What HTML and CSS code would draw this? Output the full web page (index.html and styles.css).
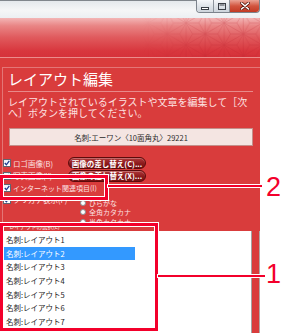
FILE: index.html
```html
<!DOCTYPE html>
<html lang="ja">
<head>
<meta charset="utf-8">
<link rel="stylesheet" href="styles.css">
</head>
<body>
<div class="window">
  <div class="titlebar">
    <div class="caption">
      <span class="cb cb-min"><svg width="8" height="3" viewBox="0 0 8 3"><rect x="0.5" y="0.5" width="7" height="2" fill="#fff" stroke="#3a3f46" stroke-width="1"/></svg></span>
      <span class="cb cb-max"><svg width="8" height="7" viewBox="0 0 8 7"><rect x="0.5" y="0.5" width="7" height="6" fill="none" stroke="#3a3f46" stroke-width="1"/><rect x="1.5" y="1.5" width="5" height="1" fill="#3a3f46"/></svg></span>
      <span class="cb cb-close"><svg width="10" height="8" viewBox="0 0 10 8"><path d="M1.5 1 L8.5 7 M8.5 1 L1.5 7" stroke="#5a1a10" stroke-width="3" stroke-linecap="round"/><path d="M1.5 1 L8.5 7 M8.5 1 L1.5 7" stroke="#fff" stroke-width="1.6" stroke-linecap="round"/></svg></span>
    </div>
  </div>
  <div class="header">
    <svg class="pattern" width="120" height="39" viewBox="0 0 120 39">
      <defs>
        <pattern id="asa" width="22" height="38.1" patternUnits="userSpaceOnUse" patternTransform="rotate(90) translate(-6 -8)">
          <g stroke="#b8202c" stroke-width="0.6" fill="none">
            <path d="M0 0 H22 M0 19.05 H22 M0 38.1 H22"/>
            <path d="M0 19.05 L11 0 L22 19.05 M0 19.05 L11 38.1 L22 19.05"/>
            <path d="M0 19.05 L11 12.7 L22 19.05 M11 0 L11 12.7"/>
            <path d="M11 0 L22 6.35 L33 0 M22 19.05 L22 6.35 M-11 0 L0 6.35 L11 0 M0 19.05 L0 6.35"/>
            <path d="M0 19.05 L11 25.4 L22 19.05 M11 38.1 L11 25.4"/>
            <path d="M11 38.1 L22 31.75 L33 38.1 M22 19.05 L22 31.75 M-11 38.1 L0 31.75 L11 38.1 M0 19.05 L0 31.75"/>
          </g>
        </pattern>
      </defs>
      <rect width="120" height="39" fill="url(#asa)"/>
    </svg>
  </div>
  <div class="panel">
    <div class="panel-inner">
      <h1 class="title">レイアウト編集</h1>
      <div class="rule"></div>
      <p class="desc"><span class="desc-line">レイアウトされているイラストや文章を編集して［次</span><span class="desc-line">へ］ボタンを押してください。</span></p>
      <div class="namefield">名刺:エーワン〈10面角丸〉29221</div>
      <div class="row row-1">
        <span class="chk"><span class="box"><svg width="6" height="6" viewBox="0 0 6 6"><path d="M0.8 3 L2.4 4.8 L5.3 0.9" fill="none" stroke="#1d3c8f" stroke-width="1.3"/></svg></span>ロゴ画像(B)</span>
        <span class="btn">画像の差し替え(C)...</span>
      </div>
      <div class="row row-2">
        <span class="chk"><span class="box"><svg width="6" height="6" viewBox="0 0 6 6"><path d="M0.8 3 L2.4 4.8 L5.3 0.9" fill="none" stroke="#1d3c8f" stroke-width="1.3"/></svg></span>写真画像(X)</span>
        <span class="btn">画像の差し替え(X)...</span>
      </div>
      <div class="row row-3">
        <span class="chk"><span class="box"><svg width="6" height="6" viewBox="0 0 6 6"><path d="M0.8 3 L2.4 4.8 L5.3 0.9" fill="none" stroke="#1d3c8f" stroke-width="1.3"/></svg></span>インターネット関連項目(I)</span>
      </div>
      <div class="row row-4">
        <span class="chk chk-wide"><span class="box"><svg width="6" height="6" viewBox="0 0 6 6"><path d="M0.8 3 L2.4 4.8 L5.3 0.9" fill="none" stroke="#1d3c8f" stroke-width="1.3"/></svg></span>フリガナ表示(F)</span>
        <div class="radios">
          <span class="radio"><span class="dot"></span>ひらがな</span>
          <span class="radio"><span class="dot"></span>全角カタカナ</span>
          <span class="radio"><span class="dot"></span>半角カタカナ</span>
        </div>
      </div>
      <div class="listlabel">レイアウトの選択(L)</div>
    </div>
  </div>
  <div class="lower">
    <ul class="list">
      <li class="item">名刺:レイアウト1</li>
      <li class="item selected">名刺:レイアウト2</li>
      <li class="item">名刺:レイアウト3</li>
      <li class="item">名刺:レイアウト4</li>
      <li class="item">名刺:レイアウト5</li>
      <li class="item">名刺:レイアウト6</li>
      <li class="item">名刺:レイアウト7</li>
    </ul>
  </div>
</div>

<div class="callout callout-2"></div>
<div class="leader leader-2"></div>
<div class="num num-2">2</div>

<div class="callout callout-1"></div>
<div class="leader leader-1"></div>
<div class="num num-1">1</div>
</body>
</html>
```

FILE: styles.css
```css
* { box-sizing: border-box; margin: 0; padding: 0; }
html, body { width: 290px; height: 333px; overflow: hidden; }
body {
  background: #fff;
  position: relative;
  font-family: "Noto Sans CJK JP", "Noto Sans", sans-serif;
}

.window {
  width: 260px;
  height: 333px;
  display: flex;
  flex-direction: column;
}

/* title bar */
.titlebar {
  height: 18px;
  flex: none;
  background: linear-gradient(#e4e8ec, #f5f6f7 55%, #eceff2);
  border-top: 1px solid #80868c;
  display: flex;
  justify-content: flex-end;
  align-items: flex-start;
}
.caption {
  display: flex;
  height: 13px;
  margin-top: -1px;
  border: 1px solid #7c838c;
  border-top: none;
  border-radius: 0 0 4px 4px;
  overflow: hidden;
}
.cb {
  display: flex;
  align-items: center;
  justify-content: center;
  height: 100%;
}
.cb-min { width: 17px; background: linear-gradient(#f6f8fa, #dfe4e9 50%, #cdd4db); border-right: 1px solid #8d949c; padding-top: 4px; }
.cb-max { width: 16px; background: linear-gradient(#f6f8fa, #dfe4e9 50%, #cdd4db); border-right: 1px solid #8d949c; }
.cb-close { width: 29px; background: linear-gradient(#eba496, #d2553f 50%, #c23a24); }

/* red header band */
.header {
  height: 40px;
  flex: none;
  background: linear-gradient(#f3b6b6 0%, #e98585 20%, #e05a5d 50%, #d8363d 85%, #d5323a 100%);
  border-bottom: 1px solid #ec8c8c;
  display: flex;
  justify-content: flex-end;
}
.pattern {
  display: block;
  opacity: 0.32;
  -webkit-mask-image: linear-gradient(to right, transparent, #000 55%);
  mask-image: linear-gradient(to right, transparent, #000 55%);
}

/* red content panel */
.panel {
  height: 173px;
  flex: none;
  background: #d93c3c;
  padding: 9px 0 0 2px;
  overflow: hidden;
}
.panel-inner {
  height: 100%;
  border-top: 1px solid rgba(255, 255, 255, 0.3);
  border-left: 1px solid rgba(255, 255, 255, 0.3);
  display: flex;
  flex-direction: column;
}
.title {
  margin: 1px 0 0 5px;
  font-size: 15px;
  line-height: 19px;
  font-weight: 400;
  color: #fff;
}
.rule {
  margin: 3px 0 0 5px;
  width: 245px;
  height: 1px;
  flex: none;
  background: rgba(255, 255, 255, 0.4);
}
.desc {
  margin: 4px 0 0 5px;
  font-size: 10px;
  color: #fde2e2;
  white-space: nowrap;
  display: flex;
  flex-direction: column;
}
.desc-line {
  display: block;
  height: 11px;
  line-height: 11px;
}
.namefield {
  margin: 10px 0 0 6px;
  width: 244px;
  height: 18px;
  flex: none;
  border: 1px solid #c48f8a;
  background: #f4e5e2;
  color: #2a2a2a;
  font-size: 7.5px;
  display: flex;
  align-items: center;
  justify-content: center;
}

.row {
  display: flex;
  align-items: center;
  flex: none;
  color: #fbe0e0;
  font-size: 7.5px;
}
.row-1 { margin-top: 11px; height: 12px; }
.row-2 { height: 13px; }
.row-3 { height: 11px; font-size: 7px; }
.row-4 { align-items: flex-start; height: 32px; }

.chk {
  display: flex;
  align-items: center;
  width: 65px;
  white-space: nowrap;
}
.chk-wide { width: 77px; margin-top: 1px; }
.box {
  width: 8px;
  height: 8px;
  margin-right: 2px;
  border: 1px solid #5f6670;
  background: linear-gradient(#eef3f8, #ffffff);
  display: flex;
  align-items: center;
  justify-content: center;
  flex: none;
}
.btn {
  width: 78px;
  height: 12px;
  border: 1px solid #5c0b0b;
  border-radius: 6px;
  background: linear-gradient(#b0393a, #8b1a1c 55%, #771113);
  box-shadow: inset 0 1px 0 rgba(255, 255, 255, 0.25);
  color: #fff;
  font-weight: 700;
  font-size: 7.5px;
  display: flex;
  align-items: center;
  justify-content: center;
  white-space: nowrap;
}

.radios {
  display: flex;
  flex-direction: column;
  margin-top: 5px;
}
.radio {
  display: flex;
  align-items: center;
  height: 9.5px;
  font-size: 7px;
  color: #fbe0e0;
}
.dot {
  width: 6px;
  height: 6px;
  border-radius: 50%;
  border: 1px solid #8a8f96;
  background: #fff;
  margin-right: 3px;
}
.listlabel {
  margin: -1px 0 0 6px;
  font-size: 5.5px;
  line-height: 6px;
  height: 6px;
  color: #fbe0e0;
}

/* white lower area with window frame on the right */
.lower {
  flex: 1;
  padding: 2px 0 0 4px;
  background: linear-gradient(to right, #fff 0 251px, #a3a3a3 251px 252px, #d93c3c 252px 259px, #b0a8a8 259px 260px);
}
.list { list-style: none; }
.item {
  width: 131px;
  height: 13.67px;
  line-height: 13.67px;
  padding-left: 2px;
  font-size: 7.5px;
  color: #222;
  white-space: nowrap;
}
.item.selected {
  background: #3399ff;
  color: #fff;
}

/* annotations laid over the screenshot */
.callout {
  position: absolute;
  border: 3px solid #f3002b;
  box-shadow: 0 0 0 1px #fff, inset 0 0 0 1px #fff;
}
.callout-2 { left: 0; top: 175px; width: 108px; height: 25px; }
.callout-1 { left: 0; top: 223px; width: 158px; height: 108px; }
.leader {
  position: absolute;
  height: 2px;
  background: #f3002b;
  box-shadow: 0 0 0 1px #fff;
}
.leader-2 { left: 108px; top: 185px; width: 154px; }
.leader-1 { left: 158px; top: 275px; width: 107px; }
.num {
  position: absolute;
  font-family: "Liberation Sans", Arial, sans-serif;
  font-size: 27px;
  line-height: 27px;
  color: #f3002b;
}
.num-2 { left: 266px; top: 174px; }
.num-1 { left: 266px; top: 261px; }
```
